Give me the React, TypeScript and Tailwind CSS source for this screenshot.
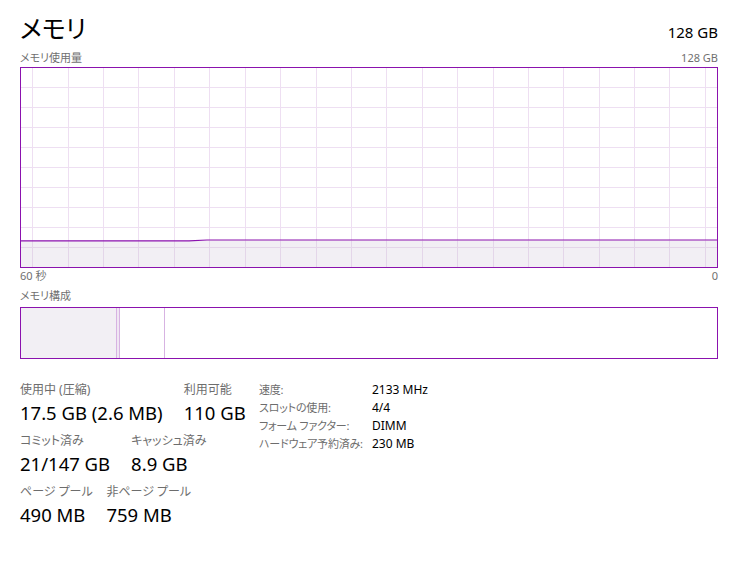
const font = {
  fontFamily: '"Noto Sans", "Noto Sans CJK JP", sans-serif',
  fontFeatureSettings: '"palt"',
};

const W = 696;
const H = 199;

function UsageGraph() {
  const hLines = Array.from({ length: 9 }, (_, i) => 19 + i * 20);
  const vLines = Array.from({ length: 20 }, (_, i) => Math.round(11.3 + i * 35.4));
  const line = "0,172.8 168,172.8 186,172 696,172";

  return (
    <div className="mt-[1px] h-[201px] w-[698px] border border-[#8b12ae] bg-white">
      <svg width={W} height={H} viewBox={`0 0 ${W} ${H}`} className="block">
        <polygon points={`${line} 696,199 0,199`} fill="#f2eff4" />
        {hLines.map((y) => (
          <line key={"h" + y} x1={0} x2={W} y1={y + 0.5} y2={y + 0.5} stroke={y > 172 ? "#e4d6e9" : "#eedff2"} />
        ))}
        {vLines.map((x) => (
          <line key={"v" + x} x1={x + 0.5} x2={x + 0.5} y1={0} y2={H} stroke="#eedff2" />
        ))}
        {vLines.map((x) => (
          <line key={"vf" + x} x1={x + 0.5} x2={x + 0.5} y1={173} y2={H} stroke="#e4d6e9" />
        ))}
        <polyline points={line} fill="none" stroke="#8b12ae" strokeWidth={1.2} />
      </svg>
    </div>
  );
}

function Composition() {
  return (
    <div className="mt-[3px] flex h-[52px] w-[698px] border border-[#8b12ae] bg-white">
      {/* in use */}
      <div className="w-[96px] border-r border-[#d7b3e2] bg-[#f2eff4]" />
      {/* modified */}
      <div className="w-[3px] border-r border-[#d7b3e2] bg-[#f0e6f3]" />
      {/* standby */}
      <div className="w-[45px] border-r border-[#d7b3e2]" />
      {/* free */}
      <div className="flex-1" />
    </div>
  );
}

// column width follows the value, the label may run past it
function Stat({ label, value }: { label: string; value: string }) {
  return (
    <div className="whitespace-nowrap">
      <p className="w-0 text-[12px] leading-[16px] text-[#6d6d6d]">{label}</p>
      <p className="mt-[3px] text-[18.5px] leading-[24px] text-black">{value}</p>
    </div>
  );
}

const specs = [
  ["速度:", "2133 MHz"],
  ["スロットの使用:", "4/4"],
  ["フォーム ファクター:", "DIMM"],
  ["ハードウェア予約済み:", "230 MB"],
];

export default function App() {
  return (
    <div className="h-[573px] w-[730px] overflow-hidden bg-white pl-[20px] pt-[10px]" style={font}>
      <div className="flex h-[36px] w-[698px] items-baseline justify-between">
        <h1 className="text-[25px] leading-[36px] text-black">メモリ</h1>
        <span className="text-[15px] text-black">128 GB</span>
      </div>

      <div className="mt-[4px] flex w-[698px] justify-between text-[11px] leading-[16px] text-[#707070]">
        <span>メモリ使用量</span>
        <span>128 GB</span>
      </div>

      <UsageGraph />

      <div className="flex w-[698px] justify-between text-[11px] leading-[16px] text-[#707070]">
        <span>60 秒</span>
        <span>0</span>
      </div>

      <p className="mt-[4px] text-[11px] leading-[16px] text-[#707070]">メモリ構成</p>

      <Composition />

      <div className="mt-[23px] flex items-start">
        <div className="flex w-[239px] flex-col gap-[8px]">
          <div className="flex gap-[21px]">
            <Stat label="使用中 (圧縮)" value="17.5 GB (2.6 MB)" />
            <Stat label="利用可能" value="110 GB" />
          </div>
          <div className="flex gap-[21px]">
            <Stat label="コミット済み" value="21/147 GB" />
            <Stat label="キャッシュ済み" value="8.9 GB" />
          </div>
          <div className="flex gap-[21px]">
            <Stat label="ページ プール" value="490 MB" />
            <Stat label="非ページ プール" value="759 MB" />
          </div>
        </div>

        <div className="-mt-[1px] grid grid-cols-[113px_auto] whitespace-nowrap text-[12px] leading-[18px]">
          {specs.map(([k, v]) => (
            <div key={k} className="contents">
              <span className="text-[11px] tracking-[-0.2px] text-[#6d6d6d]">{k}</span>
              <span className="text-black">{v}</span>
            </div>
          ))}
        </div>
      </div>
    </div>
  );
}
